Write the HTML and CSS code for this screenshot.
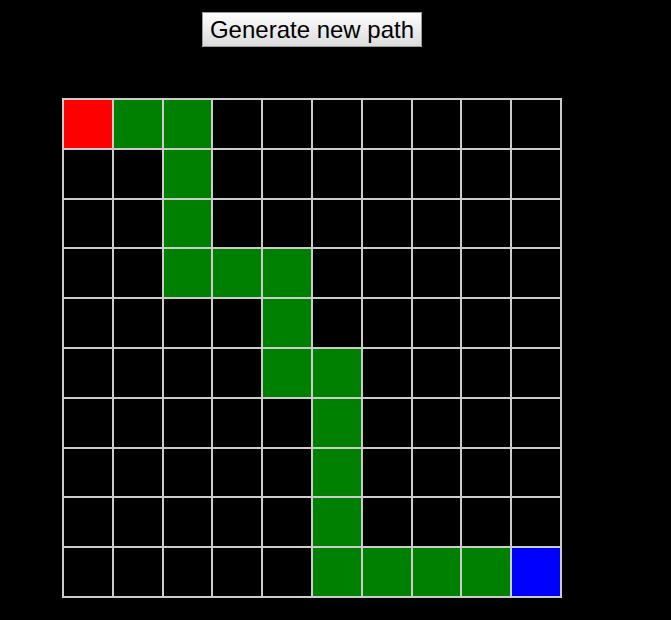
FILE: index.html
```html
<!DOCTYPE html>
<html lang="en">
<head>
  <meta charset="UTF-8" />
  <title>Path Grid</title>
  <link rel="stylesheet" href="styles.css">
</head>
<body>
  <div class="wrap">
    <div class="controls">
      <button id="newPath">Generate new path</button>
    </div>
    <div class="grid" id="grid"></div>
  </div>

  <script>
    const SIZE = 10;
    const grid = document.getElementById("grid");

    // path from top-left to bottom-right as [row, col]
    const path = [
      [0, 0], [0, 1], [0, 2], [1, 2], [2, 2], [3, 2], [3, 3], [3, 4],
      [4, 4], [5, 4], [5, 5], [6, 5], [7, 5], [8, 5], [9, 5],
      [9, 6], [9, 7], [9, 8], [9, 9]
    ];

    function draw(cells) {
      grid.innerHTML = "";
      const onPath = new Set(cells.map(([r, c]) => r * SIZE + c));
      for (let i = 0; i < SIZE * SIZE; i++) {
        const cell = document.createElement("div");
        cell.className = "cell";
        if (onPath.has(i)) cell.classList.add("path");
        if (i === 0) cell.classList.add("start");
        if (i === SIZE * SIZE - 1) cell.classList.add("end");
        grid.appendChild(cell);
      }
    }

    function randomPath() {
      const cells = [[0, 0]];
      let r = 0, c = 0;
      while (r < SIZE - 1 || c < SIZE - 1) {
        if (r === SIZE - 1) c++;
        else if (c === SIZE - 1) r++;
        else if (Math.random() < 0.5) r++;
        else c++;
        cells.push([r, c]);
      }
      return cells;
    }

    draw(path);

    document.getElementById("newPath").onclick = () => draw(randomPath());
  </script>
</body>
</html>
```

FILE: styles.css
```css
body {
  margin: 0;
  background: #000;
  font-family: 'Liberation Sans', Arial, sans-serif;
}

.wrap {
  width: 500px;
  margin-left: 62px;
  padding-top: 12px;
}

.controls {
  display: flex;
  justify-content: center;
  margin-bottom: 51px;
}

#newPath {
  font-family: 'Liberation Sans', Arial, sans-serif;
  font-size: 24px;
  line-height: 27px;
  padding: 3px 7px;
  color: #000;
  background: linear-gradient(#fdfdfd, #dcdcdc);
  border: 1px solid #9a9a9a;
  border-radius: 0;
  cursor: pointer;
}

.grid {
  box-sizing: border-box;
  width: 500px;
  height: 500px;
  display: grid;
  grid-template-columns: repeat(10, 1fr);
  grid-template-rows: repeat(10, 1fr);
  border: 1px solid #ccc;
}

.cell {
  border: 1px solid #ccc;
  background: #000;
}

.cell.path {
  background: #008000;
}

.cell.start {
  background: #ff0000;
}

.cell.end {
  background: #0000ff;
}
```
